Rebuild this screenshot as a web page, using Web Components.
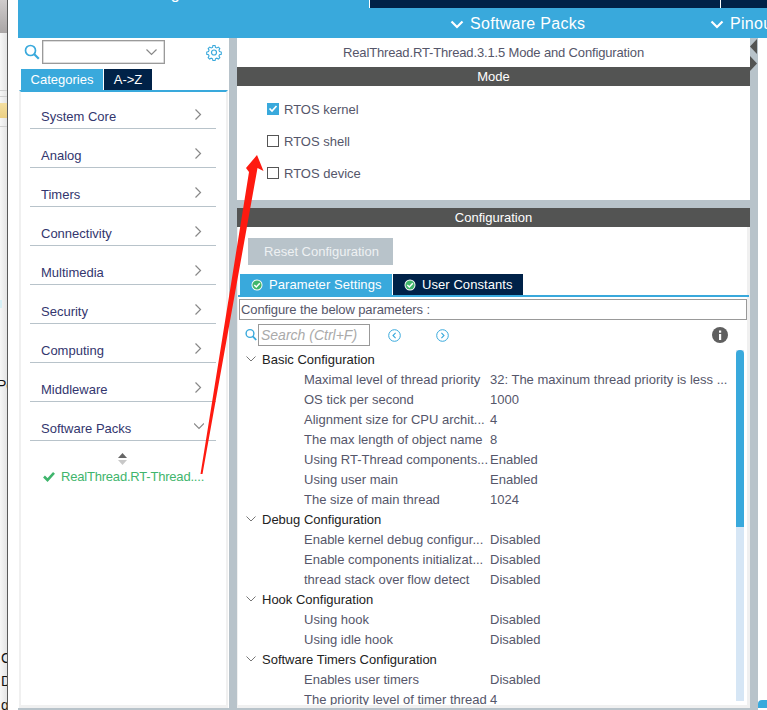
<!DOCTYPE html>
<html>
<head>
<meta charset="utf-8">
<title>RT-Thread Mode and Configuration</title>
<style>
html, body { margin: 0; padding: 0; height: 100%; overflow: hidden; background: #fff; }
body { font-family: "Liberation Sans", Arial, sans-serif; font-size: 13px; }
</style>
</head>
<body>
<cube-app>
  <cube-backdrop slot="backdrop"></cube-backdrop>
  <cube-header slot="header"></cube-header>
  <cube-sidebar slot="sidebar">
    <cube-category>System Core</cube-category>
    <cube-category>Analog</cube-category>
    <cube-category>Timers</cube-category>
    <cube-category>Connectivity</cube-category>
    <cube-category>Multimedia</cube-category>
    <cube-category>Security</cube-category>
    <cube-category>Computing</cube-category>
    <cube-category>Middleware</cube-category>
    <cube-category open="true">Software Packs</cube-category>
  </cube-sidebar>
  <cube-mode slot="mode">
    <cube-check selected="true">RTOS kernel</cube-check>
    <cube-check>RTOS shell</cube-check>
    <cube-check>RTOS device</cube-check>
  </cube-mode>
  <cube-config slot="config">
    <cube-group>Basic Configuration</cube-group>
    <cube-param name="Maximal level of thread priority" value="32: The maxinum thread priority is less ..."></cube-param>
    <cube-param name="OS tick per second" value="1000"></cube-param>
    <cube-param name="Alignment size for CPU archit..." value="4"></cube-param>
    <cube-param name="The max length of object name" value="8"></cube-param>
    <cube-param name="Using RT-Thread components..." value="Enabled"></cube-param>
    <cube-param name="Using user main" value="Enabled"></cube-param>
    <cube-param name="The size of main thread" value="1024"></cube-param>
    <cube-group>Debug Configuration</cube-group>
    <cube-param name="Enable kernel debug configur..." value="Disabled"></cube-param>
    <cube-param name="Enable components initializat..." value="Disabled"></cube-param>
    <cube-param name="thread stack over flow detect" value="Disabled"></cube-param>
    <cube-group>Hook Configuration</cube-group>
    <cube-param name="Using hook" value="Disabled"></cube-param>
    <cube-param name="Using idle hook" value="Disabled"></cube-param>
    <cube-group>Software Timers Configuration</cube-group>
    <cube-param name="Enables user timers" value="Disabled"></cube-param>
    <cube-param name="The priority level of timer thread" value="4"></cube-param>
  </cube-config>
</cube-app>

<script>
const CHEVRON_DOWN = `<svg width="14" height="9" viewBox="0 0 14 9"><path d="M1.5 1.5 L7 7 L12.5 1.5" fill="none" stroke="currentColor" stroke-width="2.2"/></svg>`;
const MAGNIFIER = `<svg width="16" height="16" viewBox="0 0 16 16"><circle cx="6.5" cy="6.5" r="5" fill="none" stroke="#39a9dc" stroke-width="1.7"/><path d="M10 10 L14.8 14.8" stroke="#39a9dc" stroke-width="2.2"/></svg>`;

class CubeApp extends HTMLElement {
  constructor() {
    super();

    const template = document.createElement( 'template' );
    template.innerHTML = `
      <style>
      :host {
        display: flex;
        height: 710px;
        overflow: hidden;
        position: relative;
        width: 767px;
      }
      .app {
        display: flex;
        flex: 1;
        flex-direction: column;
        margin-left: 10px;
        min-width: 0;
      }
      .work {
        display: flex;
        flex: 1;
        min-height: 0;
      }
      .frame {
        background: #b8c3ca;
        display: flex;
        flex: none;
        gap: 8px;
        height: 672px;
        width: 740px;
      }
      .right {
        display: flex;
        flex: none;
        flex-direction: column;
        gap: 8px;
        height: 670px;
        width: 513px;
      }
      .grip {
        display: flex;
        flex: none;
        flex-direction: column;
        gap: 2px;
        margin-left: -8px;
        padding-top: 1px;
        width: 8px;
      }
      .corner {
        align-self: flex-end;
        background: #39a9dc;
        border-top-left-radius: 4px;
        flex: none;
        height: 8px;
        margin-bottom: 2px;
        width: 9px;
      }
      svg.arrow {
        height: 710px;
        left: 0;
        pointer-events: none;
        position: absolute;
        top: 0;
        width: 767px;
      }
      </style>
      <slot name="backdrop"></slot>
      <div class="app">
        <slot name="header"></slot>
        <div class="work">
          <div class="frame">
            <slot name="sidebar"></slot>
            <div class="right">
              <slot name="mode"></slot>
              <slot name="config"></slot>
            </div>
            <div class="grip">
              <svg width="8" height="15" viewBox="0 0 8 15"><path d="M7 0 L7 15 L0 7.5 Z" fill="#535453"/></svg>
              <svg width="8" height="15" viewBox="0 0 8 15"><path d="M0 0 L0 15 L7 7.5 Z" fill="#535453"/></svg>
            </div>
          </div>
          <div class="corner"></div>
        </div>
      </div>
      <svg class="arrow" viewBox="0 0 767 710"><polygon points="257,155 263.5,171 257.5,168 202.5,474 200.5,474 249,172 246,168" fill="#fe1a10"/></svg>
    `;

    this._shadowRoot = this.attachShadow( {mode: 'open'} );
    this._shadowRoot.appendChild( template.content.cloneNode( true ) );
  }
}

class CubeBackdrop extends HTMLElement {
  constructor() {
    super();

    const template = document.createElement( 'template' );
    template.innerHTML = `
      <style>
      :host {
        background: linear-gradient( to right, #f7f7f7, #e4e4e4 );
        border-right: 1px solid #5a5a5a;
        display: flex;
        flex: none;
        flex-direction: column;
        font-family: "Liberation Sans", Arial, sans-serif;
        height: 710px;
        overflow: hidden;
        width: 7px;
      }
      .title {
        background: linear-gradient( to bottom, #cfcbcb, #aaa6a6 );
        flex: none;
        height: 33px;
      }
      .rule {
        background: #d0d0d0;
        flex: none;
        height: 1px;
      }
      .picked {
        background: linear-gradient( to bottom, #f4dfa0, #ecd084 );
        flex: none;
        height: 15px;
      }
      .sliver {
        background: #d6f0f6;
        flex: none;
        height: 8px;
        width: 2px;
      }
      .cut {
        color: #111;
        flex: none;
        font-size: 14px;
        height: 16px;
        line-height: 16px;
        margin-left: -3px;
        white-space: nowrap;
      }
      </style>
      <div class="title"></div>
      <div class="rule" style="margin-top: 57px"></div>
      <div class="rule" style="margin-top: 5px"></div>
      <div class="picked" style="margin-top: 6px"></div>
      <div class="rule" style="margin-top: 8px"></div>
      <div class="sliver" style="margin-top: 173px"></div>
      <div class="cut" style="margin-top: 69px">Pc</div>
      <div class="cut" style="margin-top: 257px">&nbsp;C</div>
      <div class="cut" style="margin-top: 7px">&nbsp;D</div>
      <div class="cut" style="margin-top: 8px">&nbsp;g</div>
    `;

    this._shadowRoot = this.attachShadow( {mode: 'open'} );
    this._shadowRoot.appendChild( template.content.cloneNode( true ) );
  }
}

class CubeHeader extends HTMLElement {
  constructor() {
    super();

    const template = document.createElement( 'template' );
    template.innerHTML = `
      <style>
      :host {
        background: #39a9dc;
        color: #fff;
        display: block;
        flex: none;
        font-size: 16px;
        height: 38px;
        letter-spacing: .3px;
        overflow: hidden;
      }
      .tabs {
        display: flex;
        height: 8px;
        overflow: hidden;
      }
      .first {
        flex: none;
        line-height: 20px;
        margin-top: -16px;
        text-align: right;
        width: 213px;
        white-space: nowrap;
      }
      .gap {
        flex: none;
        width: 138px;
      }
      .navy {
        background: #002248;
        flex: none;
        height: 8px;
      }
      .one {
        border-left: 1px solid #fff;
        border-right: 1px solid #fff;
        width: 350px;
      }
      .two {
        flex: 1;
      }
      .sub {
        align-items: center;
        box-sizing: border-box;
        display: flex;
        height: 30px;
        padding-top: 2px;
      }
      .item {
        align-items: center;
        display: flex;
        flex: none;
        gap: 6px;
        white-space: nowrap;
      }
      .item svg {
        flex: none;
      }
      </style>
      <div class="tabs">
        <div class="first">Pinout &amp; Configuration</div>
        <div class="gap"></div>
        <div class="navy one"></div>
        <div class="navy two"></div>
      </div>
      <div class="sub">
        <div class="item" style="margin-left: 432px; width: 260px">${CHEVRON_DOWN}Software Packs</div>
        <div class="item">${CHEVRON_DOWN}Pinout</div>
      </div>
    `;

    this._shadowRoot = this.attachShadow( {mode: 'open'} );
    this._shadowRoot.appendChild( template.content.cloneNode( true ) );
  }
}

class CubeSidebar extends HTMLElement {
  constructor() {
    super();

    const template = document.createElement( 'template' );
    template.innerHTML = `
      <style>
      :host {
        background: #fff;
        display: flex;
        flex: none;
        flex-direction: column;
        height: 670px;
        width: 211px;
      }
      .search {
        align-items: center;
        display: flex;
        flex: none;
        height: 24px;
        margin-top: 2px;
        padding-left: 6px;
      }
      .select {
        align-items: center;
        border: 1px solid #9a9a9a;
        box-shadow: inset 0 0 0 .5px #bbb;
        box-sizing: border-box;
        display: flex;
        height: 24px;
        justify-content: flex-end;
        margin-left: 2px;
        padding-right: 7px;
        width: 123px;
      }
      .gear {
        display: flex;
        margin-left: 41px;
      }
      .tabs {
        display: flex;
        flex: none;
        gap: 1px;
        height: 21px;
        line-height: 21px;
        margin-top: 5px;
        padding-left: 3px;
      }
      .tab {
        background: #002248;
        color: #fff;
        text-align: center;
        width: 48px;
      }
      .tab.on {
        background: #39a9dc;
        width: 82px;
      }
      .panel {
        background: #fff;
        border-color: #f0f0f0;
        border-style: solid;
        border-width: 0 2px 3px 2px;
        border-top: 2px solid #39a9dc;
        box-sizing: border-box;
        display: flex;
        flex: 1;
        flex-direction: column;
        gap: 6px;
        margin-left: 1px;
        padding: 4px 9px 0 9px;
        width: 209px;
      }
      .sort {
        display: flex;
        flex-direction: column;
        margin-top: 6px;
        padding-left: 88px;
      }
      .pack {
        align-items: center;
        color: #3fb56c;
        display: flex;
        gap: 6px;
        letter-spacing: -.2px;
        margin-top: -2px;
        padding-left: 13px;
        white-space: nowrap;
      }
      .pack svg {
        flex: none;
      }
      </style>
      <div class="search">
        ${MAGNIFIER}
        <div class="select"><svg width="11" height="7" viewBox="0 0 11 7"><path d="M.5 .5 L5.5 5.5 L10.5 .5" fill="none" stroke="#888" stroke-width="1.2"/></svg></div>
        <div class="gear">
          <svg width="16" height="17" viewBox="0 0 16 17"><circle cx="8" cy="8.5" r="2.5" fill="none" stroke="#39a9dc" stroke-width="1.2"/><path d="M6.8 .8 h2.4 l.4 2 1.5 .7 1.8 -1 1.6 1.7 -1 1.7 .6 1.6 2 .5 v2.4 l-2 .5 -.6 1.5 1 1.8 -1.6 1.6 -1.8 -1 -1.5 .7 -.4 2 h-2.4 l-.4 -2 -1.5 -.7 -1.8 1 -1.6 -1.6 1 -1.8 -.6 -1.5 -2 -.5 v-2.4 l2 -.5 .6 -1.6 -1 -1.7 1.6 -1.7 1.8 1 1.5 -.7 z" transform="translate(.8 .85) scale(.9)" fill="none" stroke="#39a9dc" stroke-width="1.2"/></svg>
        </div>
      </div>
      <div class="tabs">
        <div class="tab on">Categories</div>
        <div class="tab">A-&gt;Z</div>
      </div>
      <div class="panel">
        <slot></slot>
        <div class="sort">
          <svg width="9" height="12" viewBox="0 0 9 12"><path d="M4.5 0 L9 5 H0 Z" fill="#666"/><path d="M4.5 12 L9 7 H0 Z" fill="#c8c8c8"/></svg>
        </div>
        <div class="pack">
          <svg width="12" height="11" viewBox="0 0 12 11"><path d="M1 5.5 L4.5 9 L11 1.8" fill="none" stroke="#3fb56c" stroke-width="2.6"/></svg>
          <span>RealThread.RT-Thread....</span>
        </div>
      </div>
    `;

    this._shadowRoot = this.attachShadow( {mode: 'open'} );
    this._shadowRoot.appendChild( template.content.cloneNode( true ) );
  }
}

class CubeCategory extends HTMLElement {
  constructor() {
    super();

    const template = document.createElement( 'template' );
    template.innerHTML = `
      <style>
      :host {
        align-items: center;
        border-bottom: 1px solid #b8c3ca;
        box-sizing: border-box;
        color: #33366e;
        display: flex;
        flex: none;
        height: 33px;
        justify-content: space-between;
        padding: 9px 13px 0 11px;
        width: 186px;
      }
      svg {
        margin-top: -5px;
      }
      </style>
      <span><slot></slot></span>
      <svg width="10" height="11" viewBox="0 0 10 11"><path class="mark" fill="none" stroke="#888" stroke-width="1.2"/></svg>
    `;

    this._shadowRoot = this.attachShadow( {mode: 'open'} );
    this._shadowRoot.appendChild( template.content.cloneNode( true ) );

    this.$mark = this._shadowRoot.querySelector( '.mark' );
    this.$svg = this._shadowRoot.querySelector( 'svg' );
  }

  connectedCallback() {
    if( this.getAttribute( 'open' ) === 'true' ) {
      this.$mark.setAttribute( 'd', 'M0 2.5 L5 7.5 L10 2.5' );
      this.$svg.style.marginRight = '-1px';
    } else {
      this.$mark.setAttribute( 'd', 'M2.5 .5 L7.5 5.5 L2.5 10.5' );
    }
  }
}

class CubeBar extends HTMLElement {
  constructor() {
    super();

    const template = document.createElement( 'template' );
    template.innerHTML = `
      <style>
      :host {
        background: #535453;
        color: #fff;
        display: block;
        flex: none;
        height: 19px;
        line-height: 19px;
        text-align: center;
      }
      </style>
      <slot></slot>
    `;

    this._shadowRoot = this.attachShadow( {mode: 'open'} );
    this._shadowRoot.appendChild( template.content.cloneNode( true ) );
  }
}

class CubeMode extends HTMLElement {
  constructor() {
    super();

    const template = document.createElement( 'template' );
    template.innerHTML = `
      <style>
      :host {
        background: #fff;
        display: flex;
        flex: none;
        flex-direction: column;
        height: 162px;
      }
      .title {
        color: #55566a;
        flex: none;
        height: 29px;
        letter-spacing: -.15px;
        line-height: 30px;
        text-align: center;
      }
      .list {
        display: flex;
        flex-direction: column;
        gap: 16px;
        padding: 15px 0 0 30px;
      }
      </style>
      <div class="title">RealThread.RT-Thread.3.1.5 Mode and Configuration</div>
      <cube-bar>Mode</cube-bar>
      <div class="list"><slot></slot></div>
    `;

    this._shadowRoot = this.attachShadow( {mode: 'open'} );
    this._shadowRoot.appendChild( template.content.cloneNode( true ) );
  }
}

class CubeCheck extends HTMLElement {
  constructor() {
    super();

    const template = document.createElement( 'template' );
    template.innerHTML = `
      <style>
      :host {
        align-items: center;
        color: #55566a;
        display: flex;
        gap: 5px;
        height: 16px;
      }
      .box {
        background: #fff;
        border: 1px solid #555;
        box-sizing: border-box;
        display: flex;
        height: 12px;
        width: 12px;
      }
      .box.selected {
        background: #39a9dc;
        border-color: #39a9dc;
      }
      .box svg {
        display: none;
      }
      .box.selected svg {
        display: block;
      }
      </style>
      <div class="box"><svg width="10" height="10" viewBox="0 0 10 10"><path d="M1.5 4.5 L4 7 L8.5 2" fill="none" stroke="#fff" stroke-width="1.7"/></svg></div>
      <span><slot></slot></span>
    `;

    this._shadowRoot = this.attachShadow( {mode: 'open'} );
    this._shadowRoot.appendChild( template.content.cloneNode( true ) );

    this.$box = this._shadowRoot.querySelector( '.box' );
  }

  connectedCallback() {
    if( this.getAttribute( 'selected' ) === 'true' ) {
      this.$box.classList.add( 'selected' );
    }
  }
}

class CubeConfig extends HTMLElement {
  constructor() {
    super();

    const template = document.createElement( 'template' );
    template.innerHTML = `
      <style>
      :host {
        background: #fff;
        border-bottom: 3px solid #f0f0f0;
        border-right: 3px solid #f0f0f0;
        box-shadow: inset 1px 0 0 #f0f0f0;
        box-sizing: border-box;
        display: flex;
        flex: 1;
        flex-direction: column;
        min-height: 0;
      }
      cube-bar {
        margin-right: -3px;
      }
      button {
        background: #b8c3ca;
        border: none;
        color: #eef1f3;
        flex: none;
        font: inherit;
        height: 27px;
        margin: 11px 0 0 11px;
        padding: 0 0 0 2px;
        width: 145px;
      }
      .tabs {
        display: flex;
        flex: none;
        gap: 1px;
        height: 21px;
        letter-spacing: .07px;
        margin: 9px 0 0 3px;
        white-space: nowrap;
      }
      .tab {
        align-items: center;
        background: #002248;
        box-sizing: border-box;
        color: #fff;
        display: flex;
        gap: 6px;
        padding-left: 11px;
        width: 130px;
      }
      .tab.on {
        background: #39a9dc;
        width: 152px;
      }
      .tab svg {
        flex: none;
      }
      .line {
        background: #39a9dc;
        flex: none;
        height: 2px;
        margin: 0 -2px 0 1px;
      }
      .hint {
        border: 1px solid #999;
        box-sizing: border-box;
        color: #55566a;
        flex: none;
        height: 21px;
        letter-spacing: -.1px;
        line-height: 19px;
        margin: 2px 0 0 2px;
        padding-left: 1px;
        width: 508px;
      }
      .tools {
        align-items: center;
        display: flex;
        flex: none;
        height: 22px;
        margin-top: 4px;
        padding-left: 8px;
      }
      .find {
        border: 1px solid #999;
        box-sizing: border-box;
        color: #aaa;
        font-size: 14px;
        font-style: italic;
        height: 22px;
        line-height: 20px;
        margin-left: 1px;
        padding-left: 2px;
        width: 112px;
      }
      .info {
        margin-left: 263px;
      }
      .body {
        display: flex;
        flex: 1;
        min-height: 0;
        overflow: hidden;
      }
      .tree {
        display: flex;
        flex: 1;
        flex-direction: column;
        margin-top: 3px;
        min-width: 0;
      }
      .track {
        background: #d6e6f5;
        flex: none;
        margin: 4px 3px 4px 0;
        width: 8px;
      }
      .thumb {
        background: #39a9dc;
        border-radius: 4px 4px 0 0;
        height: 177px;
      }
      </style>
      <cube-bar>Configuration</cube-bar>
      <button>Reset Configuration</button>
      <div class="tabs">
        <div class="tab on"><svg width="12" height="12" viewBox="0 0 12 12"><circle cx="6" cy="6" r="5.5" fill="#fff"/><circle cx="6" cy="6" r="4.6" fill="#41b66b"/><path d="M3.3 6 L5.3 8 L8.8 4.2" fill="none" stroke="#fff" stroke-width="1.5"/></svg>Parameter Settings</div>
        <div class="tab"><svg width="12" height="12" viewBox="0 0 12 12"><circle cx="6" cy="6" r="5.5" fill="#fff"/><circle cx="6" cy="6" r="4.6" fill="#41b66b"/><path d="M3.3 6 L5.3 8 L8.8 4.2" fill="none" stroke="#fff" stroke-width="1.5"/></svg>User Constants</div>
      </div>
      <div class="line"></div>
      <div class="hint">Configure the below parameters :</div>
      <div class="tools">
        <svg width="12" height="14" viewBox="0 0 12 14"><circle cx="5" cy="5.5" r="3.9" fill="none" stroke="#39a9dc" stroke-width="1.4"/><path d="M7.8 8.3 L11.2 12" stroke="#39a9dc" stroke-width="1.8"/></svg>
        <div class="find">Search (Ctrl+F)</div>
        <svg style="margin-left: 18px" width="13" height="13" viewBox="0 0 13 13"><circle cx="6.5" cy="6.5" r="5.8" fill="none" stroke="#39a9dc"/><path d="M7.6 3.8 L5 6.5 L7.6 9.2" fill="none" stroke="#39a9dc" stroke-width="1.1"/></svg>
        <svg style="margin-left: 35px" width="13" height="13" viewBox="0 0 13 13"><circle cx="6.5" cy="6.5" r="5.8" fill="none" stroke="#39a9dc"/><path d="M5.4 3.8 L8 6.5 L5.4 9.2" fill="none" stroke="#39a9dc" stroke-width="1.1"/></svg>
        <svg class="info" width="16" height="16" viewBox="0 0 16 16"><circle cx="8" cy="8" r="8" fill="#5f5f5f"/><rect x="7" y="7" width="2.2" height="6" fill="#fff"/><rect x="7" y="3.5" width="2.2" height="2.2" fill="#fff"/></svg>
      </div>
      <div class="body">
        <div class="tree"><slot></slot></div>
        <div class="track"><div class="thumb"></div></div>
      </div>
    `;

    this._shadowRoot = this.attachShadow( {mode: 'open'} );
    this._shadowRoot.appendChild( template.content.cloneNode( true ) );
  }
}

class CubeGroup extends HTMLElement {
  constructor() {
    super();

    const template = document.createElement( 'template' );
    template.innerHTML = `
      <style>
      :host {
        align-items: center;
        color: #222;
        display: flex;
        flex: none;
        gap: 6px;
        height: 20px;
        padding-left: 9px;
        white-space: nowrap;
      }
      </style>
      <svg width="10" height="6" viewBox="0 0 10 6"><path d="M.5 .5 L5 5 L9.5 .5" fill="none" stroke="#777" stroke-width="1"/></svg>
      <span><slot></slot></span>
    `;

    this._shadowRoot = this.attachShadow( {mode: 'open'} );
    this._shadowRoot.appendChild( template.content.cloneNode( true ) );
  }
}

class CubeParam extends HTMLElement {
  constructor() {
    super();

    const template = document.createElement( 'template' );
    template.innerHTML = `
      <style>
      :host {
        align-items: center;
        color: #55566a;
        display: flex;
        flex: none;
        height: 20px;
        padding-left: 67px;
        white-space: nowrap;
      }
      .name {
        flex: none;
        width: 186px;
      }
      </style>
      <div class="name"></div>
      <div class="value"></div>
    `;

    this._shadowRoot = this.attachShadow( {mode: 'open'} );
    this._shadowRoot.appendChild( template.content.cloneNode( true ) );

    this.$name = this._shadowRoot.querySelector( '.name' );
    this.$value = this._shadowRoot.querySelector( '.value' );
  }

  connectedCallback() {
    this.$name.textContent = this.getAttribute( 'name' );
    this.$value.textContent = this.getAttribute( 'value' );
  }
}

window.customElements.define( 'cube-app', CubeApp );
window.customElements.define( 'cube-backdrop', CubeBackdrop );
window.customElements.define( 'cube-header', CubeHeader );
window.customElements.define( 'cube-sidebar', CubeSidebar );
window.customElements.define( 'cube-category', CubeCategory );
window.customElements.define( 'cube-bar', CubeBar );
window.customElements.define( 'cube-mode', CubeMode );
window.customElements.define( 'cube-check', CubeCheck );
window.customElements.define( 'cube-config', CubeConfig );
window.customElements.define( 'cube-group', CubeGroup );
window.customElements.define( 'cube-param', CubeParam );
</script>
</body>
</html>
